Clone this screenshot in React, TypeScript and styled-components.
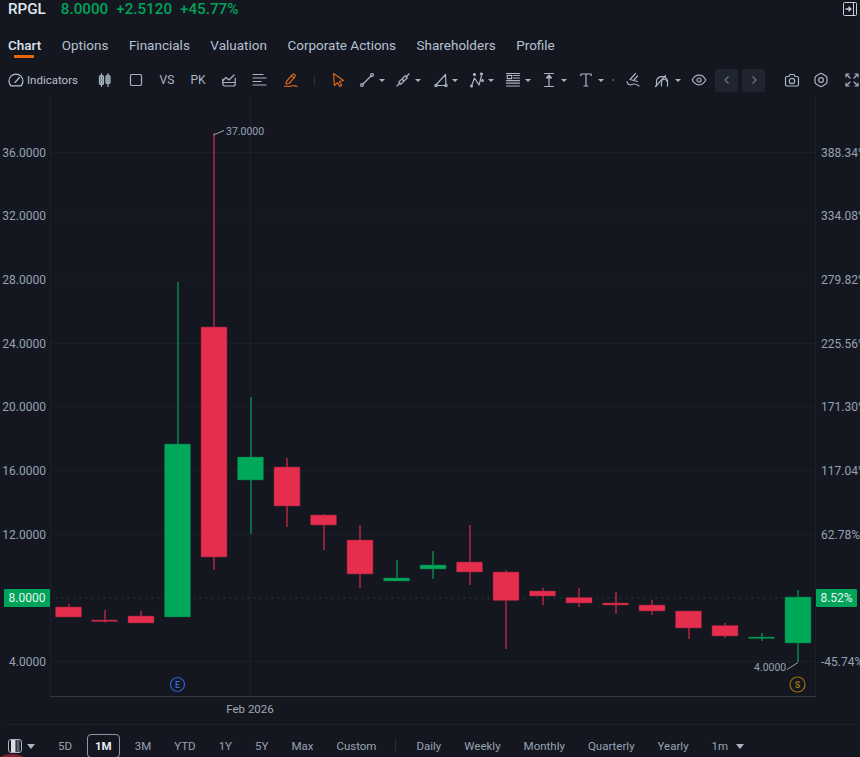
import React, { FC, ReactNode } from "react";
import styled, { createGlobalStyle } from "styled-components";

const GlobalStyle = createGlobalStyle`
  html, body {
    margin: 0;
    padding: 0;
    background: #14171f;
    overflow: hidden;
  }
`;

const Page = styled.div`
  position: relative;
  width: 860px;
  height: 757px;
  overflow: hidden;
  background: #14171f;
  font-family: Roboto, "Liberation Sans", sans-serif;
  color: #b4c0d2;
`;

const Header = styled.div`
  display: flex;
  align-items: center;
  height: 17px;
  padding: 0 2px 0 8px;
  font-size: 15.2px;
`;

const Symbol = styled.span`
  color: #dfe6f0;
  font-weight: 500;
  margin-right: 15px;
`;

const Quote = styled.span`
  color: #00a35a;
  font-weight: 500;
  margin-right: 8px;
`;

const CollapseButton = styled.span`
  margin-left: auto;
  display: flex;
`;

const Tabs = styled.div`
  display: flex;
  gap: 20.5px;
  height: 22px;
  margin-top: 17px;
  padding-left: 8px;
  font-size: 13.5px;
  line-height: 22px;
`;

const Tab = styled.div<{ $active?: boolean }>`
  position: relative;
  color: ${({ $active }) => ($active ? "#dce4ef" : "#b4c0d2")};
  font-weight: ${({ $active }) => ($active ? 500 : 400)};

  &::after {
    content: "";
    display: ${({ $active }) => ($active ? "block" : "none")};
    position: absolute;
    left: 6px;
    right: 7px;
    bottom: -2px;
    height: 3px;
    background: #e8650c;
  }
`;

const Toolbar = styled.div`
  display: flex;
  align-items: center;
  height: 24px;
  margin-top: 12px;
  padding-left: 8px;
  color: #a9b4c4;
  font-size: 11.5px;
`;

const Tool = styled.span<{ $ml?: number; $w?: number; $orange?: boolean }>`
  display: flex;
  align-items: center;
  justify-content: center;
  flex: none;
  margin-left: ${({ $ml }) => $ml ?? 0}px;
  width: ${({ $w }) => $w ?? 16}px;
  color: ${({ $orange }) => ($orange ? "#d9661a" : "inherit")};
`;

const IndicatorsButton = styled.span`
  display: flex;
  align-items: center;
  gap: 3px;
  width: 70px;
  flex: none;
  color: #b4c0d2;
`;

const TextTool = styled(Tool)`
  font-size: 12px;
  color: #a9b4c4;
`;

const Divider = styled.span<{ $ml: number }>`
  flex: none;
  width: 1px;
  height: 11px;
  margin-left: ${({ $ml }) => $ml}px;
  background: #2a2f3a;
`;

const Dot = styled.span<{ $ml: number }>`
  flex: none;
  width: 2px;
  height: 2px;
  margin-left: ${({ $ml }) => $ml}px;
  border-radius: 50%;
  background: #5a6474;
`;

const Caret = styled.span<{ $ml: number }>`
  flex: none;
  width: 0;
  height: 0;
  margin-left: ${({ $ml }) => $ml}px;
  border-left: 3px solid transparent;
  border-right: 3px solid transparent;
  border-top: 3.5px solid #a9b4c4;
`;

const NavButton = styled.span<{ $ml: number }>`
  flex: none;
  display: flex;
  align-items: center;
  justify-content: center;
  width: 23px;
  height: 23px;
  margin-left: ${({ $ml }) => $ml}px;
  border-radius: 2px;
  background: #1f242e;
  color: #6f7a8a;
`;

const ChartArea = styled.div`
  height: 627px;
  margin-top: 5px;
  margin-left: 7px;
  border-bottom: 1px solid #1c2029;
`;

const ChartSvg = styled.svg`
  display: block;
  width: 860px;
  height: 627px;
  margin-left: -7px;
`;

const Footer = styled.div`
  display: flex;
  align-items: flex-start;
  gap: 4px;
  height: 24px;
  margin-top: 9px;
  padding-left: 8px;
  font-size: 11.5px;
  color: #96a2b4;
`;

const LayoutPicker = styled.span`
  display: flex;
  align-items: center;
  gap: 5px;
  height: 24px;
  width: 36.5px;
  flex: none;
`;

const RangeButton = styled.span<{ $active?: boolean }>`
  display: flex;
  align-items: center;
  box-sizing: border-box;
  height: 24px;
  padding: 0 ${({ $active }) => ($active ? "7px" : "9.5px")};
  margin: 0 ${({ $active }) => ($active ? "1.5px" : "0")};
  border: ${({ $active }) => ($active ? "1px solid #8e98a8" : "none")};
  border-radius: 4px;
  color: ${({ $active }) => ($active ? "#e6ebf2" : "#96a2b4")};
  font-weight: ${({ $active }) => ($active ? 700 : 400)};
`;

const FooterDivider = styled.span`
  flex: none;
  width: 1px;
  height: 11px;
  margin: 6px 6.5px 0 5.5px;
  background: #2a2f3a;
`;

const FooterCaret = styled.span<{ $top: number; $ml?: number }>`
  flex: none;
  width: 0;
  height: 0;
  margin-top: ${({ $top }) => $top}px;
  margin-left: ${({ $ml }) => $ml ?? 0}px;
  border-left: 4px solid transparent;
  border-right: 4px solid transparent;
  border-top: 5px solid #a9b4c4;
`;

const CornerBadge = styled.span`
  position: absolute;
  left: -2px;
  bottom: -10px;
  width: 28px;
  height: 13px;
  border-radius: 50%;
  background: #7d2230;
`;

const Icon: FC<{ children: ReactNode; size?: number }> = ({ children, size = 16 }) => (
  <svg width={size} height={size} viewBox="0 0 16 16" fill="none" stroke="currentColor" strokeWidth={1.2} strokeLinecap="round" strokeLinejoin="round">
    {children}
  </svg>
);

const GaugeIcon = () => (
  <Icon>
    <path d="M3 14A7 7 0 1 1 13 14Z" />
    <path d="M7 10.5L11.5 5.5" />
  </Icon>
);

const CandlesIcon = () => (
  <Icon>
    <path d="M4.5 1.5v13M11 1.5v13" />
    <rect x="2.5" y="3.5" width="4" height="9" rx="1.3" fill="currentColor" fillOpacity={0.6} />
    <rect x="9" y="3.5" width="4" height="8" rx="1.3" fill="currentColor" fillOpacity={0.6} />
  </Icon>
);

const SquareIcon = () => (
  <Icon>
    <rect x="2.5" y="2.5" width="11" height="11" rx="1.2" />
  </Icon>
);

const CompareIcon = () => (
  <Icon>
    <path d="M2 8.5l3-3 3 2.5 5-5" />
    <path d="M1.8 10.5h12.4v1.5a2 2 0 0 1-2 2H3.8a2 2 0 0 1-2-2z" />
    <path d="M1.8 10.5V7M14.2 10.5V6" />
  </Icon>
);

const LinesIcon = () => (
  <Icon>
    <path d="M2 2.5h10M2 6h13M2 9.5h8M2 13h13" />
  </Icon>
);

const PenIcon = () => (
  <Icon>
    <path d="M3.5 9.5L9.3 2.6a1.7 1.7 0 0 1 2.700 2L6.2 11.5 3 12z" />
    <path d="M8.3 3.8l2.7 2.1" />
    <path d="M1.5 14.5c2-.8 3.5-.2 5 0s2-1 3.5-1 2.5 1 4 .8" />
  </Icon>
);

const CursorIcon = () => (
  <Icon>
    <path d="M3.5 1.5l10 7-4.2 1 2.400 3.700-1.900 1.200-2.400-3.800L4.500 13.500z" />
  </Icon>
);

const LineToolIcon = () => (
  <Icon>
    <path d="M4 12L12 4" />
    <circle cx="3" cy="13" r="1.4" />
    <circle cx="13" cy="3" r="1.4" />
  </Icon>
);

const ChainIcon = () => (
  <Icon>
    <path d="M2 14l3-3M11 5l3-3" />
    <rect x="3" y="6.5" width="5" height="3" rx="1" transform="rotate(-45 8 8)" />
    <rect x="8" y="6.5" width="5" height="3" rx="1" transform="rotate(-45 8 8)" />
  </Icon>
);

const AngleIcon = () => (
  <Icon>
    <path d="M3.5 13.5h9M3 13L12.5 2.5 13 12.5" />
    <circle cx="3" cy="13.5" r="1.2" />
    <circle cx="13" cy="13.5" r="1.2" />
  </Icon>
);

const WaveIcon = () => (
  <Icon>
    <path d="M2.5 14L5.5 6 10 13 12.5 4" />
    <circle cx="2.5" cy="14" r="0.9" />
    <circle cx="5.5" cy="2.5" r="1" fill="currentColor" />
    <circle cx="12.5" cy="2" r="1" fill="currentColor" />
    <circle cx="13.5" cy="8.5" r="0.9" />
  </Icon>
);

const TableIcon = () => (
  <Icon>
    <rect x="2.2" y="3.3" width="4.5" height="3.3" />
    <path d="M1.5 1.5h13M8.5 3.5h6M8.5 6h6M1.5 8.7h13M1.5 11.2h13M1.5 14h13" />
  </Icon>
);

const ArrowBarIcon = () => (
  <Icon>
    <path d="M3.5 1.5h9M3.5 14.5h9M8 5.5v9" />
    <path d="M5.5 6L8 3l2.5 3z" fill="currentColor" />
  </Icon>
);

const TextIcon = () => (
  <Icon>
    <path d="M2.8 3.6V2h10.4v1.600M8 2v12M6 14h4" />
  </Icon>
);

const SketchIcon = () => (
  <Icon>
    <path d="M10.5 1.5L5 7.5l7.5 2M12.5 4L9 8" />
    <path d="M2 9.5c.5 3 3 4 5 3s3-.8 7 1.5" />
  </Icon>
);

const ArcIcon = () => (
  <Icon>
    <path d="M2.5 14V8.5a5.8 5.8 0 0 1 11 0V14" />
    <path d="M1.5 14.5L11.5 3.5" />
    <path d="M7.5 14V9.5a2.8 2.8 0 0 1 5.5 0" />
  </Icon>
);

const EyeIcon = () => (
  <Icon>
    <path d="M1.2 8C3 4.6 5.3 3.2 8 3.2s5 1.4 6.8 4.8c-1.8 3.4-4.1 4.8-6.8 4.8S3 11.4 1.2 8z" />
    <circle cx="8" cy="8" r="2" />
  </Icon>
);

const ChevronIcon: FC<{ dir: "left" | "right" }> = ({ dir }) => (
  <svg width="10" height="10" viewBox="0 0 10 10" fill="none" stroke="currentColor" strokeWidth={1.1}>
    <path d={dir === "left" ? "M6.5 1.5L3 5l3.5 3.5" : "M3.5 1.5L7 5 3.5 8.5"} />
  </svg>
);

const CameraIcon = () => (
  <Icon>
    <path d="M3 4.5h2L6 2.5h4l1 2h2a1.5 1.5 0 0 1 1.5 1.5v6.5A1.5 1.5 0 0 1 13 14H3a1.5 1.5 0 0 1-1.5-1.5V6A1.5 1.5 0 0 1 3 4.5z" />
    <circle cx="8" cy="9" r="2.7" />
  </Icon>
);

const SettingsIcon = () => (
  <Icon>
    <path d="M6.8 1.8a2.4 2.4 0 0 1 2.4 0l3.600 2.100a2.400 2.400 0 0 1 1.200 2v4.200a2.400 2.400 0 0 1-1.200 2l-3.600 2.100a2.400 2.400 0 0 1-2.400 0l-3.600-2.100a2.400 2.400 0 0 1-1.200-2V5.900a2.400 2.400 0 0 1 1.200-2z" />
    <circle cx="8" cy="8" r="2.4" />
  </Icon>
);

const FullscreenIcon = () => (
  <Icon>
    <path d="M2 5V2h3M14 5V2h-3M2 11v3h3M14 11v3h-3" />
    <path d="M2.5 2.5L6 6M13.5 2.5L10 6M2.5 13.5L6 10M13.5 13.5L10 10" />
  </Icon>
);

const CollapseIcon = () => (
  <svg width="16" height="16" viewBox="0 0 16 16" fill="none" stroke="#c5cedb" strokeWidth={1}>
    <rect x="1.5" y="1.5" width="13" height="13" rx="1" />
    <path d="M11.5 1.5v13" />
    <path d="M3.5 8h5M6.5 5.8L8.8 8 6.5 10.2" strokeWidth={1.4} />
  </svg>
);

const ColumnsIcon = () => (
  <svg width="14" height="14" viewBox="0 0 14 14">
    <rect x="0.5" y="0.5" width="13" height="13" rx="2.5" fill="none" stroke="#a9b4c4" />
    <rect x="3" y="1" width="4.5" height="12" fill="#d8dde5" />
    <rect x="8.5" y="1" width="3" height="12" fill="#59616e" />
  </svg>
);

type Candle = { x: number; high: number; top: number; bottom: number; low: number; up?: boolean };

// page pixels, the svg viewBox below starts at the chart's own top edge
const candles: Candle[] = [
  { x: 68.5, high: 604, top: 607, bottom: 617, low: 617 },
  { x: 104.5, high: 610, top: 620, bottom: 621.5, low: 622.5 },
  { x: 141, high: 611, top: 616, bottom: 623, low: 623 },
  { x: 177.5, high: 282, top: 444, bottom: 617, low: 617, up: true },
  { x: 214, high: 133, top: 327, bottom: 557, low: 570 },
  { x: 250.5, high: 397, top: 457, bottom: 480, low: 534, up: true },
  { x: 287, high: 458, top: 467, bottom: 506, low: 527 },
  { x: 323.5, high: 514, top: 515, bottom: 525, low: 550 },
  { x: 360, high: 525, top: 540, bottom: 574, low: 588 },
  { x: 396.5, high: 560, top: 578, bottom: 581, low: 581, up: true },
  { x: 433, high: 551, top: 565, bottom: 569, low: 579, up: true },
  { x: 469.5, high: 525, top: 562, bottom: 572, low: 585 },
  { x: 506, high: 570, top: 572, bottom: 600.5, low: 649 },
  { x: 542.5, high: 588, top: 591, bottom: 596, low: 605 },
  { x: 579, high: 588, top: 597.5, bottom: 603, low: 607 },
  { x: 615.5, high: 592, top: 603, bottom: 605, low: 614 },
  { x: 652, high: 600, top: 605, bottom: 611, low: 615 },
  { x: 688.5, high: 611, top: 611, bottom: 628, low: 639 },
  { x: 725, high: 623, top: 625.5, bottom: 636, low: 638 },
  { x: 761.5, high: 633, top: 637, bottom: 638.5, low: 641, up: true },
  { x: 798, high: 590, top: 597, bottom: 643, low: 662, up: true },
];

const gridRows = [
  { y: 152.5, price: "36.0000", pct: "388.34%" },
  { y: 216, price: "32.0000", pct: "334.08%" },
  { y: 280, price: "28.0000", pct: "279.82%" },
  { y: 343.5, price: "24.0000", pct: "225.56%" },
  { y: 407, price: "20.0000", pct: "171.30%" },
  { y: 470.5, price: "16.0000", pct: "117.04%" },
  { y: 534.5, price: "12.0000", pct: "62.78%" },
  { y: 661.5, price: "4.0000", pct: "-45.74%" },
];

const AXIS = "#95a2b5";
const GRID = "#1b1f28";
const LABEL_FONT = "Roboto, 'Liberation Sans', sans-serif";

const Chart: FC = () => (
  <ChartSvg viewBox="0 97 860 627" fontFamily={LABEL_FONT} fontSize={12}>
    {gridRows.map((r) => (
      <g key={r.price}>
        <line x1={50} x2={815} y1={r.y} y2={r.y} stroke={GRID} />
        <text x={46} y={r.y + 4} textAnchor="end" fill={AXIS}>{r.price}</text>
        <text x={821} y={r.y + 4} fill={AXIS}>{r.pct}</text>
      </g>
    ))}
    <line x1={50.5} x2={50.5} y1={97} y2={696} stroke={GRID} />
    <line x1={250.5} x2={250.5} y1={97} y2={696} stroke={GRID} />
    <line x1={815.5} x2={815.5} y1={97} y2={696} stroke={GRID} />
    <line x1={50} x2={816} y1={696.5} y2={696.5} stroke="#333844" />
    <text x={250} y={713} textAnchor="middle" fill="#a0a8b4" fontSize={11.5}>Feb 2026</text>

    <line x1={50} x2={815} y1={598} y2={598} stroke="#0d6b44" strokeDasharray="1 5" />

    {candles.map((c) => {
      const body = c.up ? "#00a85a" : "#e52e4d";
      const wick = c.up ? "#0b6b40" : "#8a2238";
      const wickX = Math.round(c.x);
      return (
        <g key={c.x}>
          <line x1={wickX} x2={wickX} y1={c.high} y2={c.low} stroke={wick} strokeWidth={2} />
          <rect x={c.x - 13} y={c.top} width={26} height={c.bottom - c.top} rx={0.5} fill={body} stroke={wick} strokeWidth={0.5} />
        </g>
      );
    })}

    <path d="M213.5 135L224 130.5" stroke="#9aa5b5" fill="none" />
    <text x={226} y={135} fill={AXIS} fontSize={10.5}>37.0000</text>
    <path d="M787 669.5L798 662.5" stroke="#9aa5b5" fill="none" />
    <text x={754} y={671} fill={AXIS} fontSize={10.5}>4.0000</text>

    <rect x={4} y={589} width={46} height={18} rx={1} fill="#00a35a" />
    <text x={27} y={602} textAnchor="middle" fill="#e8f5ee">8.0000</text>
    <rect x={816} y={589} width={41} height={18} rx={1} fill="#00a35a" />
    <text x={836.5} y={602} textAnchor="middle" fill="#e8f5ee">8.52%</text>

    <circle cx={177.5} cy={684.5} r={7} fill="none" stroke="#2f5fd0" strokeWidth={1.2} />
    <text x={177.5} y={688} textAnchor="middle" fill="#3a68cc" fontSize={9} fontWeight={500}>E</text>
    <circle cx={797.5} cy={684.5} r={7.5} fill="none" stroke="#99700f" strokeWidth={1.2} />
    <text x={797.5} y={688} textAnchor="middle" fill="#99700f" fontSize={9} fontWeight={700}>S</text>
  </ChartSvg>
);

const tabs = ["Chart", "Options", "Financials", "Valuation", "Corporate Actions", "Shareholders", "Profile"];
const ranges = ["5D", "1M", "3M", "YTD", "1Y", "5Y", "Max", "Custom"];
const periods = ["Daily", "Weekly", "Monthly", "Quarterly", "Yearly", "1m"];

const App: FC = () => (
  <Page>
    <GlobalStyle />
    <Header>
      <Symbol>RPGL</Symbol>
      <Quote>8.0000</Quote>
      <Quote>+2.5120</Quote>
      <Quote>+45.77%</Quote>
      <CollapseButton><CollapseIcon /></CollapseButton>
    </Header>
    <Tabs>
      {tabs.map((t) => (
        <Tab key={t} $active={t === "Chart"}>{t}</Tab>
      ))}
    </Tabs>
    <Toolbar>
      <IndicatorsButton><GaugeIcon />Indicators</IndicatorsButton>
      <Tool $ml={19}><CandlesIcon /></Tool>
      <Tool $ml={15}><SquareIcon /></Tool>
      <TextTool $ml={15}>VS</TextTool>
      <TextTool $ml={15}>PK</TextTool>
      <Tool $ml={15}><CompareIcon /></Tool>
      <Tool $ml={14}><LinesIcon /></Tool>
      <Tool $ml={16} $orange><PenIcon /></Tool>
      <Divider $ml={15} />
      <Tool $ml={15} $orange><CursorIcon /></Tool>
      <Tool $ml={13}><LineToolIcon /></Tool>
      <Caret $ml={4} />
      <Tool $ml={10}><ChainIcon /></Tool>
      <Caret $ml={4} />
      <Tool $ml={12}><AngleIcon /></Tool>
      <Caret $ml={3} />
      <Tool $ml={11}><WaveIcon /></Tool>
      <Caret $ml={3} />
      <Tool $ml={11}><TableIcon /></Tool>
      <Caret $ml={4} />
      <Tool $ml={10}><ArrowBarIcon /></Tool>
      <Caret $ml={4} />
      <Tool $ml={11}><TextIcon /></Tool>
      <Caret $ml={4} />
      <Dot $ml={8} />
      <Tool $ml={11}><SketchIcon /></Tool>
      <Tool $ml={13}><ArcIcon /></Tool>
      <Caret $ml={5} />
      <Tool $ml={10}><EyeIcon /></Tool>
      <NavButton $ml={8}><ChevronIcon dir="left" /></NavButton>
      <NavButton $ml={4}><ChevronIcon dir="right" /></NavButton>
      <Tool $ml={19}><CameraIcon /></Tool>
      <Tool $ml={13}><SettingsIcon /></Tool>
      <Tool $ml={15}><FullscreenIcon /></Tool>
    </Toolbar>
    <ChartArea>
      <Chart />
    </ChartArea>
    <Footer>
      <LayoutPicker>
        <ColumnsIcon />
        <FooterCaret $top={0} />
      </LayoutPicker>
      {ranges.map((r) => (
        <RangeButton key={r} $active={r === "1M"}>{r}</RangeButton>
      ))}
      <FooterDivider />
      {periods.map((p) => (
        <RangeButton key={p}>{p}</RangeButton>
      ))}
      <FooterCaret $top={10} $ml={-6} />
    </Footer>
    <CornerBadge />
  </Page>
);

export default App;
